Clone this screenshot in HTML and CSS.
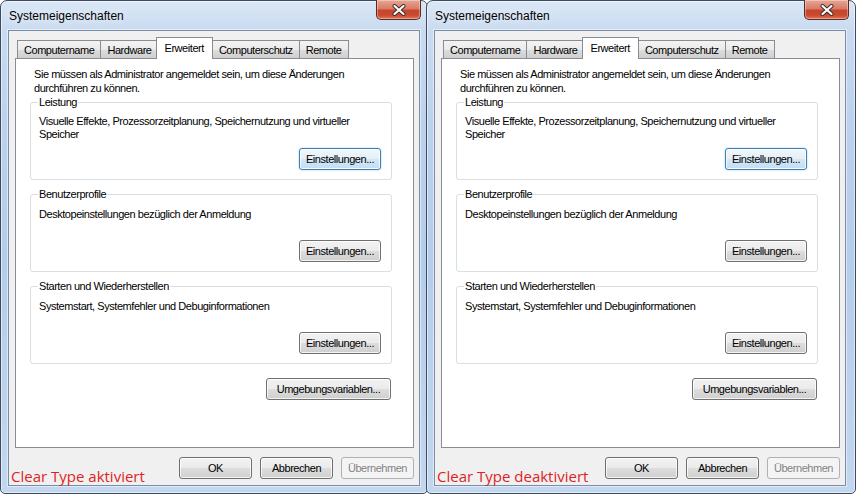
FILE: index.html
```html
<!DOCTYPE html>
<html lang="de">
<head>
<meta charset="utf-8">
<title>Systemeigenschaften</title>
<link rel="stylesheet" href="styles.css">
</head>
<body>
<div class="desk">
  <div class="window">
    <div class="titlebar">
      <span class="title">Systemeigenschaften</span>
      <div class="close"><svg width="16" height="12" viewBox="0 0 16 12"><path d="M3.5 2 L12.5 10 M12.5 2 L3.5 10" stroke="#3a2a28" stroke-width="4" stroke-linecap="round"/><path d="M3.5 2 L12.5 10 M12.5 2 L3.5 10" stroke="#fff" stroke-width="2.2" stroke-linecap="round"/></svg></div>
    </div>
    <div class="client">
      <div class="tabs">
        <div class="tab">Computername</div>
        <div class="tab">Hardware</div>
        <div class="tab sel">Erweitert</div>
        <div class="tab">Computerschutz</div>
        <div class="tab">Remote</div>
      </div>
      <div class="page">
        <p class="intro">Sie müssen als Administrator angemeldet sein, um diese Änderungen<br>durchführen zu können.</p>
        <fieldset class="group">
          <legend>Leistung</legend>
          <p class="desc">Visuelle Effekte, Prozessorzeitplanung, Speichernutzung und virtueller<br>Speicher</p>
          <div class="btnrow"><button class="btn set focus">Einstellungen...</button></div>
        </fieldset>
        <fieldset class="group">
          <legend>Benutzerprofile</legend>
          <p class="desc">Desktopeinstellungen bezüglich der Anmeldung</p>
          <div class="btnrow"><button class="btn set">Einstellungen...</button></div>
        </fieldset>
        <fieldset class="group">
          <legend>Starten und Wiederherstellen</legend>
          <p class="desc">Systemstart, Systemfehler und Debuginformationen</p>
          <div class="btnrow"><button class="btn set">Einstellungen...</button></div>
        </fieldset>
        <div class="envrow"><button class="btn env">Umgebungsvariablen...</button></div>
      </div>
      <div class="footer">
        <button class="btn dlg">OK</button>
        <button class="btn dlg">Abbrechen</button>
        <button class="btn dlg off">Übernehmen</button>
      </div>
    </div>
    <div class="note">Clear Type aktiviert</div>
  </div>

  <div class="window second">
    <div class="titlebar">
      <span class="title">Systemeigenschaften</span>
      <div class="close"><svg width="16" height="12" viewBox="0 0 16 12"><path d="M3.5 2 L12.5 10 M12.5 2 L3.5 10" stroke="#3a2a28" stroke-width="4" stroke-linecap="round"/><path d="M3.5 2 L12.5 10 M12.5 2 L3.5 10" stroke="#fff" stroke-width="2.2" stroke-linecap="round"/></svg></div>
    </div>
    <div class="client">
      <div class="tabs">
        <div class="tab">Computername</div>
        <div class="tab">Hardware</div>
        <div class="tab sel">Erweitert</div>
        <div class="tab">Computerschutz</div>
        <div class="tab">Remote</div>
      </div>
      <div class="page">
        <p class="intro">Sie müssen als Administrator angemeldet sein, um diese Änderungen<br>durchführen zu können.</p>
        <fieldset class="group">
          <legend>Leistung</legend>
          <p class="desc">Visuelle Effekte, Prozessorzeitplanung, Speichernutzung und virtueller<br>Speicher</p>
          <div class="btnrow"><button class="btn set focus">Einstellungen...</button></div>
        </fieldset>
        <fieldset class="group">
          <legend>Benutzerprofile</legend>
          <p class="desc">Desktopeinstellungen bezüglich der Anmeldung</p>
          <div class="btnrow"><button class="btn set">Einstellungen...</button></div>
        </fieldset>
        <fieldset class="group">
          <legend>Starten und Wiederherstellen</legend>
          <p class="desc">Systemstart, Systemfehler und Debuginformationen</p>
          <div class="btnrow"><button class="btn set">Einstellungen...</button></div>
        </fieldset>
        <div class="envrow"><button class="btn env">Umgebungsvariablen...</button></div>
      </div>
      <div class="footer">
        <button class="btn dlg">OK</button>
        <button class="btn dlg">Abbrechen</button>
        <button class="btn dlg off">Übernehmen</button>
      </div>
    </div>
    <div class="note">Clear Type deaktiviert</div>
  </div>
</div>
</body>
</html>
```
FILE: styles.css
```css
* { box-sizing: border-box; }
html, body { margin: 0; padding: 0; background: #fff; }
body {
  width: 856px;
  height: 494px;
  overflow: hidden;
  font-family: "Liberation Sans", Arial, sans-serif;
  font-size: 11px;
  letter-spacing: -0.45px;
  color: #000;
}
.desk { display: flex; align-items: flex-start; }

.window {
  position: relative;
  width: 428px;
  height: 494px;
  border: 1px solid #3a4b63;
  border-radius: 7px 7px 5px 5px;
  background: linear-gradient(180deg, #dbe7f5 0px, #c9dbf0 30px, #bcd2ec 120px, #b4cdea 260px, #c3d7ee 494px);
  box-shadow: inset 0 0 0 1px rgba(255,255,255,0.55);
  display: flex;
  flex-direction: column;
}
.window.second { width: 430px; margin-left: -2px; }

.titlebar {
  height: 29px;
  flex: none;
  display: flex;
  align-items: center;
  padding-left: 8px;
  position: relative;
}
.title {
  font-size: 12px;
  letter-spacing: 0;
  color: #000;
  text-shadow: 0 0 8px rgba(255,255,255,0.9);
  margin-top: 1px;
}
.close {
  position: absolute;
  top: -1px;
  right: 6px;
  width: 45px;
  height: 20px;
  border: 1px solid #5c2a22;
  border-top: none;
  border-radius: 0 0 5px 5px;
  background: linear-gradient(180deg, #e7a797 0%, #d97b66 45%, #c7452c 55%, #c94a30 80%, #e0765a 100%);
  box-shadow: inset 0 0 0 1px rgba(255,255,255,0.35);
  display: flex;
  align-items: center;
  justify-content: center;
}

.client {
  flex: none;
  margin: 0 0 0 7px;
  width: 412px;
  height: 456px;
  border: 1px solid #7a8da7;
  box-shadow: 0 0 0 1px rgba(255,255,255,0.5);
  background: #f0f0f0;
  display: flex;
  flex-direction: column;
  padding: 6px 5px 0 6px;
}

.tabs {
  display: flex;
  align-items: flex-end;
  height: 21px;
  padding-left: 2px;
  position: relative;
  z-index: 1;
}
.tab {
  height: 18px;
  border: 1px solid #898c95;
  border-bottom: none;
  margin-right: -1px;
  padding: 0 6px;
  display: flex;
  align-items: center;
  background: linear-gradient(180deg, #f3f3f3 0%, #ebebeb 50%, #dddddd 51%, #cfcfcf 100%);
  white-space: nowrap;
}
.tab.sel {
  height: 22px;
  margin: 0 -1px -1px -2px;
  padding: 0 8px 2px;
  background: #fff;
  position: relative;
  z-index: 2;
}

.page {
  height: 390px;
  background: #fff;
  border: 1px solid #898c95;
  padding: 8px 21px 0 14px;
  display: flex;
  flex-direction: column;
}
.intro {
  margin: 0 0 0 4px;
  line-height: 14px;
}
.group {
  margin: 0;
  min-width: 0;
  border: 1px solid #d5dfe5;
  border-radius: 3px;
  padding: 0 10px 9px 7px;
}
.group + .group { margin-top: 7px; }
.group legend {
  padding: 0 1px;
  line-height: 14px;
}
.desc {
  margin: 6px 0 0 1px;
  height: 33px;
  line-height: 13px;
}
.group + .group .desc { margin-top: 7px; height: 32px; }
.btnrow { display: flex; justify-content: flex-end; }
.envrow { display: flex; justify-content: flex-end; margin-top: 14px; margin-right: 1px; }

.btn {
  height: 22px;
  border: 1px solid #707070;
  border-radius: 3px;
  background: linear-gradient(180deg, #f2f2f2 0%, #ebebeb 48%, #dddddd 52%, #cfcfcf 100%);
  box-shadow: inset 0 0 0 1px rgba(255,255,255,0.75);
  font: inherit;
  letter-spacing: inherit;
  color: #000;
  padding: 0 4px;
  margin: 0;
}
.btn.set { width: 82px; }
.btn.env { width: 125px; }
.btn.focus {
  border-color: #3c7fb1;
  background: linear-gradient(180deg, #f1f7fc 0%, #e4eff8 48%, #d3e6f5 52%, #c6def1 100%);
  box-shadow: inset 0 0 0 1px rgba(255,255,255,0.8), 0 0 2px rgba(80,160,220,0.6);
}
.footer {
  display: flex;
  justify-content: flex-end;
  gap: 8px;
  margin-top: 9px;
}
.btn.dlg { width: 73px; }
.btn.off {
  border-color: #adb2b5;
  background: #f4f4f4;
  color: #838383;
  box-shadow: none;
}

.note {
  position: absolute;
  left: 10px;
  top: 465px;
  font-family: "Open Sans", "Noto Sans", sans-serif;
  font-size: 15px;
  letter-spacing: 0;
  line-height: 20px;
  color: #dd1f26;
}
```
